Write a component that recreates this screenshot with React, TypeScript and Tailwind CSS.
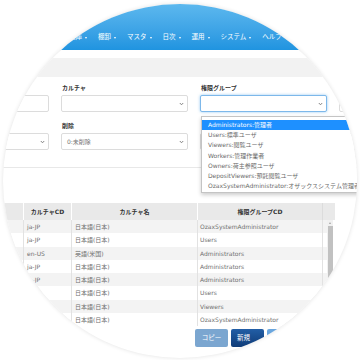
const navItems = ["在庫", "棚卸", "マスタ", "日次", "運用", "システム", "ヘルプ"];

const options = [
  "Administrators:管理者",
  "Users:標準ユーザ",
  "Viewers:閲覧ユーザ",
  "Workers:管理作業者",
  "Owners:荷主参照ユーザ",
  "DepositViewers:預託閲覧ユーザ",
  "OzaxSystemAdministrator:オザックスシステム管理者",
];

const rows = [
  ["ja-JP", "日本語(日本)", "OzaxSystemAdministrator"],
  ["ja-JP", "日本語(日本)", "Users"],
  ["en-US", "英語(米国)", "Administrators"],
  ["ja-JP", "日本語(日本)", "Administrators"],
  ["ja-JP", "日本語(日本)", "Administrators"],
  ["ja-JP", "日本語(日本)", "Users"],
  ["ja-JP", "日本語(日本)", "Viewers"],
  ["ja-JP", "日本語(日本)", "OzaxSystemAdministrator"],
];

const Chevron = () => (
  <svg width="5" height="4" viewBox="0 0 5 4" className="shrink-0">
    <polyline points="0.8,1 2.5,2.8 4.2,1" fill="none" stroke="#777" strokeWidth="0.9" />
  </svg>
);

const Field = ({
  label,
  value,
  select,
  focused,
  children,
}: {
  label?: string;
  value?: string;
  select?: boolean;
  focused?: boolean;
  children?: React.ReactNode;
}) => (
  <div className="relative">
    <div className="h-[8px] leading-[8px] mb-[3px] text-[6px] font-bold text-[#333] pl-[1px]">{label}</div>
    <div
      className={`h-[17px] rounded-[2px] bg-white border flex items-center justify-between pl-[5px] pr-[3px] ${
        focused ? "border-[#7db8ea] shadow-[0_0_3px_rgba(102,175,233,0.7)]" : "border-[#dcdcdc]"
      }`}
    >
      <span className="text-[6px] leading-[8px] text-[#777]">{value}</span>
      {select && <Chevron />}
    </div>
    {children}
  </div>
);

export default function App() {
  return (
    <div className="w-[360px] h-[360px] bg-white pt-[4px] pl-[3px] font-['DejaVu_Sans','Noto_Sans_CJK_JP',sans-serif]">
      <div className="w-[354px] h-[354px] rounded-full overflow-hidden bg-white shadow-[0_0_4px_rgba(0,0,0,0.12)]">
        <nav className="h-[46px] bg-linear-to-b from-[#5cb8ee] to-[#1f94e0] flex items-end pb-[9px] pl-[66px] gap-[11px]">
          {navItems.map((n) => (
            <div key={n} className="flex items-center gap-[3px] text-white text-[6.5px] leading-[7px] shrink-0">
              <span>{n}</span>
              <span className="w-0 h-0 border-x-[1.5px] border-t-[2px] border-x-transparent border-t-white" />
            </div>
          ))}
        </nav>

        <div className="h-[8px]" />
        <div className="h-[19px] bg-[#f2f2f2]" />

        <div className="pt-[7px] pb-[17px] border-b border-[#e8e8e8]">
          <div className="grid grid-cols-[repeat(4,127px)] gap-x-[12px] gap-y-[10px] ml-[-81px]">
            <Field />
            <Field label="カルチャ" select />
            <Field label="権限グループ" select focused>
              <div className="absolute z-10 top-[32px] left-[1px] w-[172px] bg-white border border-[#c4c4c4] shadow-[0_2px_4px_rgba(0,0,0,0.2)] pt-[3px] pb-[1px]">
                {options.map((o, i) => (
                  <div
                    key={o}
                    className={`h-[10.2px] leading-[10.2px] pl-[6px] text-[6px] whitespace-nowrap ${
                      i === 0 ? "bg-[#1e90ff] text-white" : "text-[#6a6a6a]"
                    }`}
                  >
                    {o}
                  </div>
                ))}
              </div>
            </Field>
            <Field />
            <Field select />
            <Field label="削除" value="0:未削除" select />
            <Field select />
            <Field />
          </div>
        </div>

        <div className="mt-[35px] ml-[-29px] w-[361px] text-[6px]">
          <div className="flex h-[17px] bg-[#e9e9e9] text-[#333] font-bold">
            <div className="w-[50px] border-r border-white" />
            <div className="w-[48px] border-r border-white flex items-center justify-center">カルチャCD</div>
            <div className="w-[126px] border-r border-white flex items-center justify-center">カルチャ名</div>
            <div className="w-[125px] border-r border-[#dcdcdc] flex items-center justify-center">権限グループCD</div>
            <div className="w-[12px]" />
          </div>
          <div className="flex">
            <div className="w-[353px]">
              {rows.map((r, i) => (
                <div
                  key={i}
                  className={`flex h-[13.3px] leading-[13.3px] text-[#707070] ${i % 2 === 0 ? "bg-[#f3f3f3]" : "bg-white"}`}
                >
                  <div className="w-[50px] border-r border-[#e2e2e2]" />
                  <div className="w-[48px] border-r border-[#e2e2e2] pl-[3px] whitespace-nowrap overflow-hidden">{r[0]}</div>
                  <div className="w-[126px] border-r border-[#e2e2e2] pl-[3px] whitespace-nowrap overflow-hidden">{r[1]}</div>
                  <div className="w-[125px] border-r border-[#e2e2e2] pl-[2px] whitespace-nowrap overflow-hidden">{r[2]}</div>
                  <div className="w-[4px]" />
                </div>
              ))}
            </div>
            <div className="w-[6px] bg-[#f1f1f1] flex flex-col items-center pt-[2px]">
              <span className="w-0 h-0 border-x-[1.5px] border-b-[2px] border-x-transparent border-b-[#a3a3a3]" />
              <div className="w-[5px] h-[62px] mt-[2px] bg-[#c1c1c1]" />
            </div>
          </div>
        </div>

        <div className="mt-[3px] pl-[192px] flex gap-[3px]">
          <div className="w-[33px] h-[18px] rounded-[2px] bg-[#7ba6d0] text-white text-[6.5px] flex items-center justify-center">
            コピー
          </div>
          <div className="w-[33px] h-[18px] rounded-[2px] bg-linear-to-b from-[#225ea6] to-[#0f3c78] text-white text-[6.5px] flex items-center pl-[6px]">
            新規
          </div>
          <div className="w-[33px] h-[18px] rounded-[2px] bg-[#6aa6de]" />
        </div>
      </div>
    </div>
  );
}
